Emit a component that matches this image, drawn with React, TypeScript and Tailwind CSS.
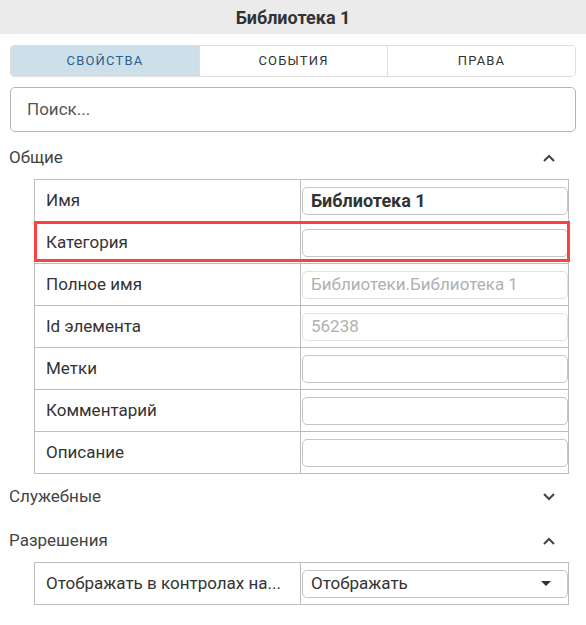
import { useState } from "react";

type Field = {
  label: string;
  value?: string;
  bold?: boolean;
  disabled?: boolean;
  highlighted?: boolean;
};

const TABS = ["Свойства", "События", "Права"];

const GENERAL: Field[] = [
  { label: "Имя", value: "Библиотека 1", bold: true },
  { label: "Категория", highlighted: true },
  { label: "Полное имя", value: "Библиотеки.Библиотека 1", disabled: true },
  { label: "Id элемента", value: "56238", disabled: true },
  { label: "Метки" },
  { label: "Комментарий" },
  { label: "Описание" },
];

function Chevron({ up }: { up: boolean }) {
  return (
    <svg width="12" height="8" viewBox="0 0 12 8" className="text-[#444]">
      <path
        d={up ? "M1 7 L6 2 L11 7" : "M1 1 L6 6 L11 1"}
        fill="none"
        stroke="currentColor"
        strokeWidth="2"
      />
    </svg>
  );
}

function Section({
  title,
  open,
  children,
}: {
  title: string;
  open: boolean;
  children?: React.ReactNode;
}) {
  return (
    <div>
      <div className="flex h-[44px] items-center justify-between pl-[9px] pr-[31px] pt-px">
        <span className="text-[17px] text-[#444]">{title}</span>
        <Chevron up={open} />
      </div>
      {open && children}
    </div>
  );
}

function FieldRow({ field, first }: { field: Field; first: boolean }) {
  return (
    <div
      className={
        "relative grid grid-cols-[266px_1fr] " +
        (first ? "h-[41px]" : "h-[42px] border-t border-[#bdbdbd]")
      }
    >
      <div className="flex items-center border-r border-[#bdbdbd] pl-[11px] text-[17px] text-[#333]">
        {field.label}
      </div>
      <div className="flex items-center pl-[1px] pr-0">
        <div
          className={
            "flex h-[28px] w-full items-center rounded-[5px] border px-[8px] " +
            (field.disabled
              ? "border-[#e0e0e0] text-[#b0b0b0]"
              : "border-[#c4c4c4] text-[#333]") +
            (field.bold ? " text-[18px] font-bold" : " text-[17px]")
          }
        >
          {field.value}
        </div>
      </div>
      {field.highlighted && (
        <div className="pointer-events-none absolute -left-px -right-[2px] -top-px h-[41px] border-[3px] border-[#ff4040]" />
      )}
    </div>
  );
}

export default function App() {
  const [tab, setTab] = useState(0);

  return (
    <div
      className="min-h-screen bg-white"
      style={{ fontFamily: "Roboto, 'Noto Sans', sans-serif" }}
    >
      <div className="flex h-[34px] items-center justify-center bg-[#ebebeb] text-[18px] font-bold text-[#333]">
        Библиотека 1
      </div>

      <div className="mx-[10px] mt-[11px] grid h-[32px] grid-cols-3 overflow-hidden rounded-[4px] border border-[#dedede]">
        {TABS.map((t, i) => (
          <button
            key={t}
            onClick={() => setTab(i)}
            className={
              "text-[13px] uppercase tracking-[0.09em] " +
              (i > 0 ? "border-l border-[#dedede] " : "") +
              (tab === i
                ? "bg-[#cddfe8] text-[#2a5f92]"
                : "bg-white text-[#333]")
            }
          >
            {t}
          </button>
        ))}
      </div>

      <div className="mx-[10px] mt-[10px] flex h-[45px] items-center rounded-[5px] border border-[#b5b5b5] px-[16px] text-[17px] text-[#555]">
        Поиск...
      </div>

      <div className="mt-[3px]">
        <Section title="Общие" open>
          <div className="ml-[34px] mr-[17px] border border-[#bdbdbd]">
            {GENERAL.map((f, i) => (
              <FieldRow key={f.label} field={f} first={i === 0} />
            ))}
          </div>
        </Section>
        <Section title="Служебные" open={false} />
        <Section title="Разрешения" open>
          <div className="ml-[34px] mr-[17px] border border-[#bdbdbd]">
            <div className="grid h-[41px] grid-cols-[266px_1fr]">
              <div className="flex items-center border-r border-[#bdbdbd] pl-[11px] text-[17px] text-[#333]">
                Отображать в контролах на...
              </div>
              <div className="flex items-center pl-[1px]">
                <div className="flex h-[28px] w-full items-center justify-between rounded-[5px] border border-[#c4c4c4] pl-[8px] pr-[16px] text-[17px] text-[#333]">
                  <span>Отображать</span>
                  <svg width="10" height="5" viewBox="0 0 10 5">
                    <path d="M0 0 L10 0 L5 5 Z" fill="#333" />
                  </svg>
                </div>
              </div>
            </div>
          </div>
        </Section>
      </div>
    </div>
  );
}
